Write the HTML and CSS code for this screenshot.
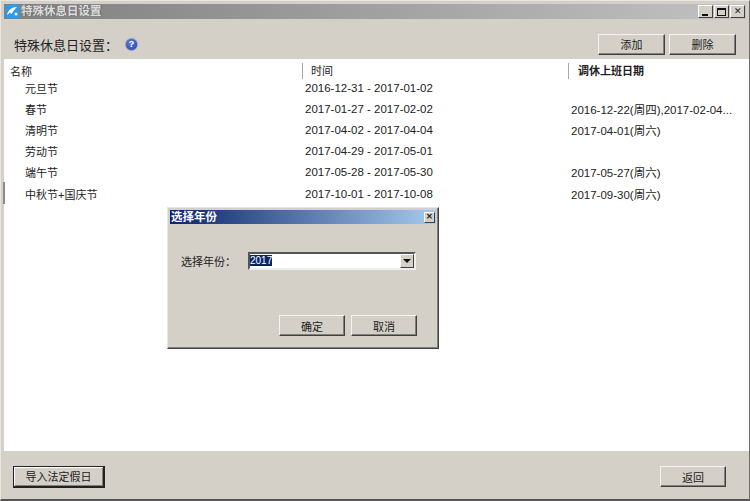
FILE: index.html
```html
<!DOCTYPE html>
<html lang="zh">
<head>
<meta charset="utf-8">
<title>特殊休息日设置</title>
<link rel="stylesheet" href="styles.css">
</head>
<body>
<div class="window">
  <div class="titlebar">
    <svg class="app-icon" width="15" height="15" viewBox="0 0 15 15"><rect x="0.5" y="0.5" width="14" height="14" rx="2" fill="#2f9be8"/><path d="M2 11C3 6 7 3 12 3C10 5 8 7 6.500 10L5 8.500Z" fill="#fff"/><circle cx="11" cy="10" r="1.500" fill="#fff"/></svg>
    <span class="title-text">特殊休息日设置</span>
    <div class="caption-buttons">
      <span class="caption-btn"><i class="glyph-min"></i></span>
      <span class="caption-btn"><i class="glyph-max"></i></span>
      <span class="caption-btn close-btn">✕</span>
    </div>
  </div>
  <div class="toolbar">
    <span class="toolbar-label">特殊休息日设置：</span>
    <span class="help-icon">?</span>
    <div class="toolbar-actions">
      <button class="btn btn-toolbar">添加</button>
      <button class="btn btn-toolbar">删除</button>
    </div>
  </div>
  <div class="list">
    <div class="list-head">
      <span class="col-name">名称</span>
      <span class="col-time head-sep">时间</span>
      <span class="col-work head-sep head-bold">调休上班日期</span>
    </div>
    <div class="row"><span class="col-name">元旦节</span><span class="col-time">2016-12-31 - 2017-01-02</span><span class="col-work"></span></div>
    <div class="row"><span class="col-name">春节</span><span class="col-time">2017-01-27 - 2017-02-02</span><span class="col-work">2016-12-22(周四),2017-02-04...</span></div>
    <div class="row"><span class="col-name">清明节</span><span class="col-time">2017-04-02 - 2017-04-04</span><span class="col-work">2017-04-01(周六)</span></div>
    <div class="row"><span class="col-name">劳动节</span><span class="col-time">2017-04-29 - 2017-05-01</span><span class="col-work"></span></div>
    <div class="row"><span class="col-name">端午节</span><span class="col-time">2017-05-28 - 2017-05-30</span><span class="col-work">2017-05-27(周六)</span></div>
    <div class="row row-marked"><span class="col-name">中秋节+国庆节</span><span class="col-time">2017-10-01 - 2017-10-08</span><span class="col-work">2017-09-30(周六)</span></div>
  </div>
  <div class="footer">
    <button class="btn btn-import">导入法定假日</button>
    <button class="btn btn-back">返回</button>
  </div>
  <div class="dialog">
    <div class="dialog-title">
      <span>选择年份</span>
      <span class="caption-btn dialog-close">✕</span>
    </div>
    <div class="dialog-body">
      <div class="dialog-field">
        <span class="field-label">选择年份：</span>
        <div class="combo">
          <span class="combo-value"><span class="combo-selected">2017</span></span>
          <span class="combo-arrow"><i></i></span>
        </div>
      </div>
      <div class="dialog-actions">
        <button class="btn btn-dialog">确定</button>
        <button class="btn btn-dialog">取消</button>
      </div>
    </div>
  </div>
</div>
</body>
</html>
```
FILE: styles.css
```css
* { box-sizing: border-box; }
html, body { margin: 0; padding: 0; }
body { width: 750px; height: 501px; overflow: hidden; font-family: "Liberation Sans", "Noto Sans CJK SC", sans-serif; font-size: 11px; color: #222; }
.window { position: relative; width: 750px; height: 501px; display: flex; flex-direction: column; background: #d4d0c8; border-top: 1px solid #e8e6e1; border-left: 1px solid #e8e6e1; border-right: 1px solid #6e6c68; border-bottom: 2px solid #555; padding: 3px 3px 0 3px; }
.titlebar { height: 15px; flex: none; display: flex; align-items: center; background: linear-gradient(90deg, #7f7f7f, #c2c2c2); padding-left: 1px; }
.app-icon { flex: none; margin-right: 1px; }
.title-text { font-size: 11.500px; line-height: 14px; margin-top: -1px; font-weight: 700; color: #dcdcdc; text-shadow: 1px 0 0 #666; }
.caption-buttons { margin-left: auto; display: flex; margin-right: 1px; }
.caption-btn { width: 15px; height: 13px; margin-left: 1px; background: #d4d0c8; border: 1px solid; border-color: #fff #404040 #404040 #fff; display: flex; align-items: center; justify-content: center; font-size: 9px; line-height: 1; color: #222; }
.glyph-min { display: block; width: 6px; height: 2px; background: #111; margin-top: 6px; margin-right: 2px; }
.glyph-max { display: block; width: 9px; height: 8px; border: 1px solid #111; border-top-width: 2px; }
.toolbar { height: 40px; flex: none; display: flex; align-items: center; padding: 10px 10px 0 10px; }
.toolbar-label { font-size: 13px; color: #222; width: 111px; }
.help-icon { width: 13px; height: 13px; border-radius: 50%; background: radial-gradient(circle at 40% 35%, #5f80dc, #1f3fa8); border: 1px solid #8f9bb8; color: #fff; font-size: 9px; font-weight: 700; display: flex; align-items: center; justify-content: center; }
.toolbar-actions { margin-left: auto; display: flex; gap: 4px; }
.btn { background: #d4d0c8; border: 1px solid; border-color: #f4f3f0 #404040 #404040 #f4f3f0; box-shadow: inset -1px -1px 0 #808080; font-family: inherit; font-size: 11px; color: #222; padding: 0; display: flex; align-items: center; justify-content: center; }
.btn-toolbar { width: 67px; height: 21px; }
.list { flex: 1; min-height: 0; background: #fff; margin: 0 -3px 0 0; }
.list-head { height: 20px; display: flex; align-items: center; padding-top: 4px; }
.list-head .col-name { padding-left: 6px; width: 298px; }
.list-head .col-time { width: 266px; padding-left: 8px; }
.head-sep { border-left: 1px solid #a8a8a8; height: 16px; line-height: 16px; }
.head-bold { font-weight: 700; padding-left: 9px; }
.row { height: 21.200px; display: flex; align-items: center; position: relative; top: -2px; }
.row-marked::before { content: ""; position: absolute; left: -1px; top: -1px; width: 2px; height: 22px; background: #8a8a8a; }
.row .col-name { width: 301px; padding-left: 21px; }
.row .col-time { width: 266px; font-size: 11.500px; }
.row .col-work { font-size: 11.500px; }
.col-time, .col-work { white-space: nowrap; }
.footer { height: 48px; flex: none; display: flex; align-items: center; justify-content: space-between; padding: 3px 20px 0 9px; }
.btn-import { width: 92px; height: 22px; border: 1px solid #222; border-bottom-width: 2px; border-right-width: 2px; box-shadow: inset 1px 1px 0 #fff, inset -1px -1px 0 #808080; }
.btn-back { width: 66px; height: 21px; }
.dialog { position: absolute; left: 166px; top: 206px; width: 272px; height: 142px; background: #d4d0c8; border: 1px solid; border-color: #e8e6e1 #404040 #404040 #e8e6e1; padding: 2px; box-shadow: inset -1px -1px 0 #808080; display: flex; flex-direction: column; }
.dialog-title { height: 14px; flex: none; display: flex; align-items: center; justify-content: space-between; padding: 0 1px; background: linear-gradient(90deg, #0a246a, #a6caf0); color: #fff; font-weight: 700; font-size: 11.500px; line-height: 13px; }
.dialog-close { width: 11px; height: 11px; font-size: 8px; }
.dialog-body { flex: 1; display: flex; flex-direction: column; padding: 28px 19px 0 11px; }
.dialog-field { display: flex; align-items: center; }
.field-label { width: 67px; }
.combo { width: 168px; height: 18px; display: flex; background: #fff; border: 2px solid; border-color: #555 #eee #eee #555; }
.combo-value { flex: 1; line-height: 14px; font-size: 10px; }
.combo-selected { background: #0a246a; color: #fff; }
.combo-arrow { width: 14px; background: #d4d0c8; border: 1px solid; border-color: #fff #404040 #404040 #fff; display: flex; align-items: center; justify-content: center; }
.combo-arrow i { width: 0; height: 0; border-left: 4px solid transparent; border-right: 4px solid transparent; border-top: 4px solid #111; }
.dialog-actions { display: flex; justify-content: flex-end; gap: 6px; margin-top: 45px; }
.btn-dialog { width: 66px; height: 21px; }
```
